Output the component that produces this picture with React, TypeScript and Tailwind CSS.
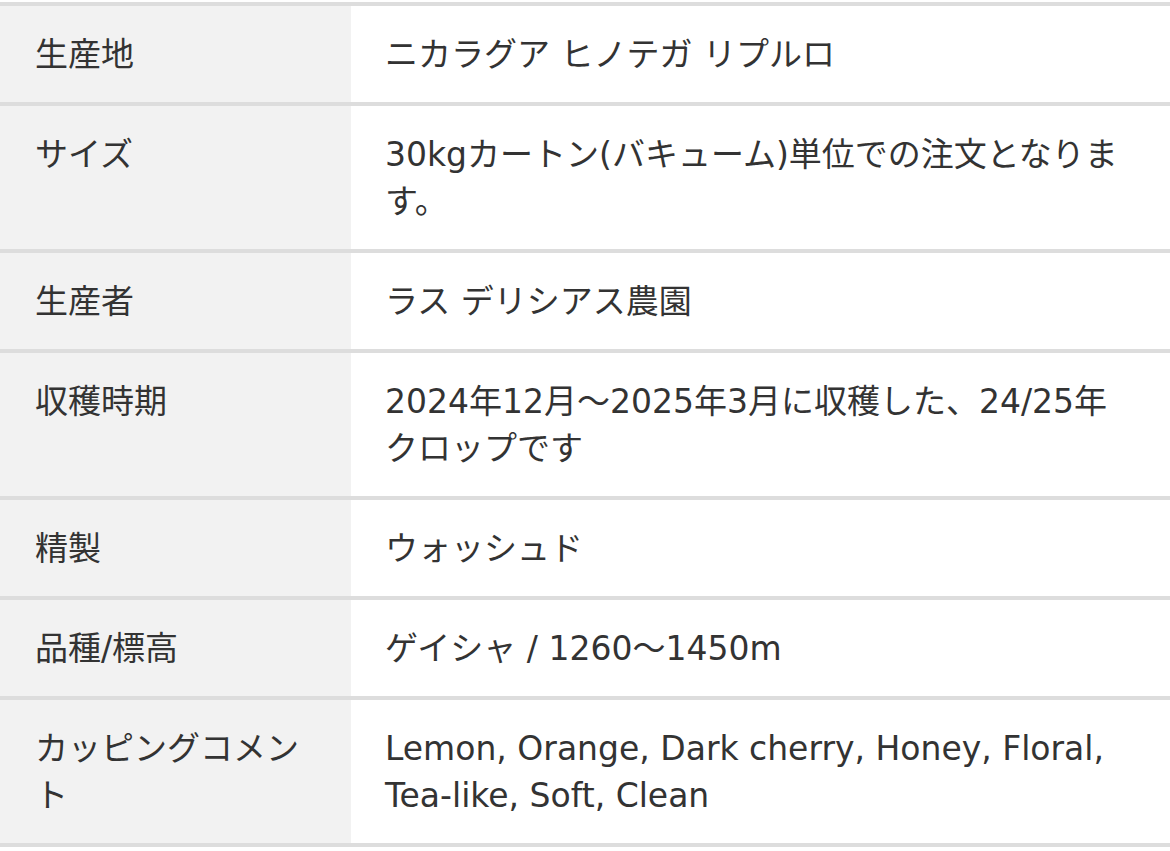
const rows: { label: string; value: string }[] = [
  { label: "生産地", value: "ニカラグア ヒノテガ リプルロ" },
  { label: "サイズ", value: "30kgカートン(バキューム)単位での注文となります。" },
  { label: "生産者", value: "ラス デリシアス農園" },
  { label: "収穫時期", value: "2024年12月〜2025年3月に収穫した、24/25年クロップです" },
  { label: "精製", value: "ウォッシュド" },
  { label: "品種/標高", value: "ゲイシャ / 1260〜1450m" },
  { label: "カッピングコメント", value: "Lemon, Orange, Dark cherry, Honey, Floral, Tea-like, Soft, Clean" },
];

export default function App() {
  return (
    <div
      className="min-h-screen bg-white pt-[2px] text-[#333333]"
      style={{ fontFamily: '"DejaVu Sans", "Noto Sans CJK JP", sans-serif' }}
    >
      <table className="w-full table-fixed border-collapse text-[33px] leading-[47px]">
        <tbody>
          {rows.map((row) => (
            <tr key={row.label} className="border-y-4 border-[#dddddd]">
              <th className="w-[30%] bg-[#f2f2f2] py-[24.5px] pl-[35px] pr-[20px] text-left align-top font-normal">
                {row.label}
              </th>
              <td className="py-[24.5px] pl-[34px] pr-[40px] align-top">{row.value}</td>
            </tr>
          ))}
        </tbody>
      </table>
    </div>
  );
}
